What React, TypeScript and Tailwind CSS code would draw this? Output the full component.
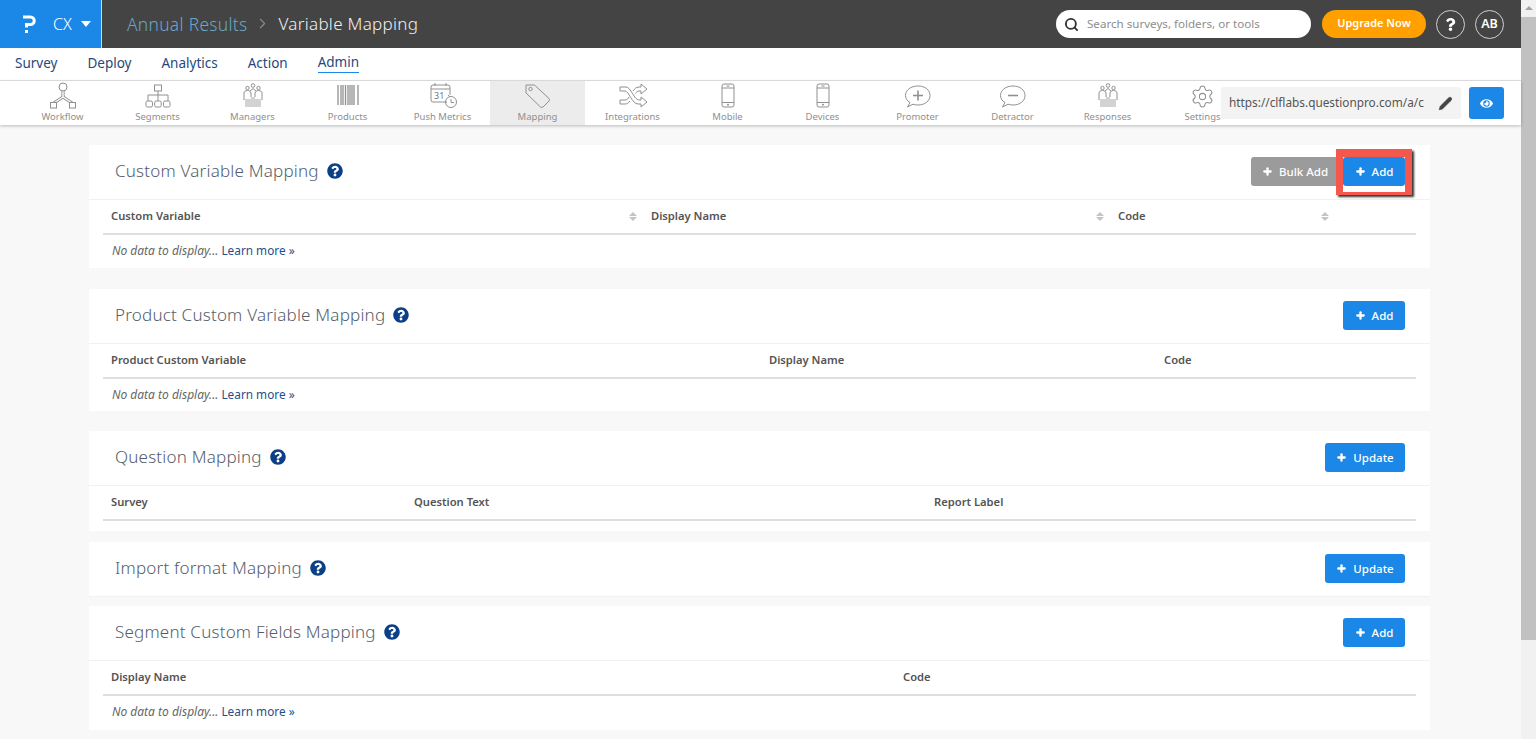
import { ChevronRight, Pencil, Plus, Search, Settings } from "lucide-react";
import { FaEye, FaQuestion, FaQuestionCircle } from "react-icons/fa";
import type { ReactNode } from "react";

const topNav = ["Survey", "Deploy", "Analytics", "Action", "Admin"];

function Svg({ children }: { children: ReactNode }) {
  return (
    <svg width="32" height="28" viewBox="0 0 32 28" fill="none" stroke="#909090" strokeWidth="1">
      {children}
    </svg>
  );
}

function People() {
  return (
    <Svg>
      <circle cx="16" cy="3.500" r="1.800" />
      <circle cx="10.500" cy="6" r="1.700" />
      <circle cx="21.500" cy="6" r="1.700" />
      <path d="M7 18v-7c0-1.500 1.500-2.500 3.500-2.500s3 1 3.500 2.500v4M18 15v-4c.5-1.500 1.500-2.500 3.500-2.500s3.500 1 3.500 2.500v7" />
      <path d="M13 9l3-2.500L19 9" />
      <path d="M9 17v8M11 17v8M13 17v8M15 15v10M17 15v10M19 17v8M21 17v8M23 17v8" strokeWidth=".8" />
    </Svg>
  );
}

function Phone() {
  return (
    <Svg>
      <rect x="10" y="2" width="12" height="23" rx="2" />
      <path d="M10 6h12M10 20.500h12M14.500 4h3" />
      <circle cx="16" cy="22.700" r=".6" fill="#909090" />
    </Svg>
  );
}

function Bubble({ plus }: { plus?: boolean }) {
  return (
    <Svg>
      <path d="M8 20.500c-3-1.700-4.500-4-4.500-7C3.500 8 9 4 16 4s12 4 12 9.500S23 23 16 23c-1.700 0-3.500-.2-5-.8L5.500 25z" />
      <path d="M11 13.500h10" strokeWidth="1.600" />
      {plus && <path d="M16 8.500v10" strokeWidth="1.600" />}
    </Svg>
  );
}

const tools: { label: string; icon: ReactNode; active?: boolean }[] = [
  {
    label: "Workflow",
    icon: (
      <Svg>
        <path d="M16 8v7L7 21M16 15l9 6" strokeWidth="3.200" />
        <path d="M16 8v7L7 21M16 15l9 6" strokeWidth="1.400" stroke="#ffffff" />
        <circle cx="16" cy="5" r="4" fill="#ffffff" />
        <rect x="3.500" y="20.500" width="6" height="5.500" fill="#ffffff" />
        <rect x="22.500" y="20.500" width="6" height="5.500" fill="#ffffff" />
      </Svg>
    ),
  },
  {
    label: "Segments",
    icon: (
      <Svg>
        <rect x="12.500" y="3" width="7" height="6" />
        <path d="M16 9v4M6 19v-6h20v6M16 13v6" />
        <rect x="4" y="19" width="6.500" height="6" rx="1.500" />
        <rect x="12.700" y="19" width="6.500" height="6" rx="1.500" />
        <rect x="21.500" y="19" width="6.500" height="6" rx="1.500" />
      </Svg>
    ),
  },
  { label: "Managers", icon: <People /> },
  {
    label: "Products",
    icon: (
      <Svg>
        <path d="M6 3v20M9 3v20M11 3v20M13.500 3v20M16 3v20M18 3v20M20 3v20M22 3v20M26 3v20" strokeWidth="1.300" />
      </Svg>
    ),
  },
  {
    label: "Push Metrics",
    icon: (
      <Svg>
        <path d="M20 20H6a2 2 0 0 1-2-2V5a2 2 0 0 1 2-2h15a2 2 0 0 1 2 2v8M4 7h19M8 1v3M19 1v3" />
        <text x="7" y="17" fontSize="9" fill="#777" stroke="none" fontFamily="'Noto Sans', sans-serif">
          31
        </text>
        <circle cx="24" cy="20" r="5.500" />
        <path d="M24 17v3.500h3M21 13l1.500 1.500" />
      </Svg>
    ),
  },
  {
    label: "Mapping",
    active: true,
    icon: (
      <Svg>
        <path
          d="M4 3h8.500L27 16.500a2 2 0 0 1 0 2.500l-6 6a2 2 0 0 1-2.500 0L4 11z"
          strokeLinejoin="round"
        />
        <circle cx="8.500" cy="7" r="1.700" />
      </Svg>
    ),
  },
  {
    label: "Integrations",
    icon: (
      <Svg>
        <path d="M3 5h6c5 0 8 13 13 13h2v-3l6 5-6 5v-3h-3C15 22 12 9 8 9H3zM3 22v-4h5c2 0 3-1 4-3M16 9c1.500-2 3-4 6-4h2V2l6 5-6 5V9h-2c-1.500 0-2.500 1-3.500 2.500M3 22h5c2 0 3.500-1 5-3" />
      </Svg>
    ),
  },
  { label: "Mobile", icon: <Phone /> },
  { label: "Devices", icon: <Phone /> },
  { label: "Promoter", icon: <Bubble plus /> },
  { label: "Detractor", icon: <Bubble /> },
  { label: "Responses", icon: <People /> },
  {
    label: "Settings",
    icon: (
      <div className="flex h-[28px] w-[32px] items-center justify-center">
        <Settings size={25} strokeWidth={1} className="text-[#909090]" />
      </div>
    ),
  },
];

function Btn({ label, width, gray }: { label: string; width: string; gray?: boolean }) {
  return (
    <button
      className={`flex h-[29px] items-center justify-center gap-[6px] rounded-[3px] text-[11.500px] font-medium text-white ${width} ${
        gray ? "bg-[#9b9b9b]" : "bg-[#1b87e6]"
      }`}
    >
      <Plus size={11} strokeWidth={5} />
      {label}
    </button>
  );
}

function Card({
  title,
  actions,
  columns,
  sorted,
  empty,
  className,
}: {
  title: string;
  actions: ReactNode;
  columns?: { label: string; width: string }[];
  sorted?: boolean;
  empty?: boolean;
  className: string;
}) {
  return (
    <section className={`bg-white ${className}`}>
      <div className="flex h-[55px] items-center justify-between border-b border-[#f1f1f1] pb-[1px] pl-[26px] pr-[25px]">
        <div className="flex items-center gap-[8px] pb-[2px]">
          <h2 className="text-[17px] font-light tracking-[0.2px] text-[#545e6b]">{title}</h2>
          <FaQuestionCircle size={16} className="text-[#0b3f87]" />
        </div>
        {actions}
      </div>
      {columns && (
        <div className="mx-[14px] flex h-[35px] items-center border-b-2 border-[#dedede] text-[11.200px] font-semibold text-[#545454]">
          {columns.map((c) => (
            <div key={c.label} className={`flex items-center justify-between pl-[8px] pr-[6px] ${c.width}`}>
              {c.label}
              {sorted && (
                <span className="flex flex-col gap-[1px]">
                  <span className="h-0 w-0 border-x-[4px] border-b-[4px] border-x-transparent border-b-[#c4c4c4]" />
                  <span className="h-0 w-0 border-x-[4px] border-t-[4px] border-x-transparent border-t-[#c4c4c4]" />
                </span>
              )}
            </div>
          ))}
        </div>
      )}
      {empty && (
        <p className="mx-[14px] pl-[9px] pt-[7px] text-[11.800px] text-[#666]">
          <em className="text-[12px]">No data to display...</em> <span className="text-[#1f4e8c]">Learn more »</span>
        </p>
      )}
    </section>
  );
}

export default function App() {
  return (
    <div className="flex h-[739px] w-full overflow-hidden bg-[#f8f8f8] font-['Noto_Sans',sans-serif]">
      <div className="flex min-w-0 flex-1 flex-col">
        <header className="flex h-12 shrink-0 items-center bg-[#444444]">
          <div className="flex h-full w-[102px] items-center border-r border-[#d8d8d8] bg-[#1b87e6] pl-[22px] text-white">
            <svg width="14" height="20" viewBox="0 0 14 20" fill="none" stroke="white" strokeWidth="3">
              <path d="M1 3h7.500a3.700 3.700 0 0 1 0 7.500H4.500v3" />
              <path d="M4.500 16v3" />
            </svg>
            <span className="ml-[17px] text-[16px] font-light">CX</span>
            <span className="ml-[9px] h-0 w-0 border-x-[5.500px] border-t-[6px] border-x-transparent border-t-white" />
          </div>
          <div className="ml-[25px] flex items-center">
            <span className="text-[17.400px] font-light tracking-[0.3px] text-[#6aa6c8]">Annual Results</span>
            <ChevronRight size={17} strokeWidth={1.500} className="mx-[7px] text-[#8b8b8b]" />
            <span className="text-[17px] font-light tracking-[0.3px] text-[#f1f1f1]">Variable Mapping</span>
          </div>
          <div className="ml-auto flex items-center">
            <div className="flex h-[28px] w-[255px] items-center gap-[8px] rounded-full bg-white pl-[8px] text-[11.600px] text-[#8d8d8d]">
              <Search size={15} strokeWidth={3} className="text-[#333]" />
              Search surveys, folders, or tools
            </div>
            <button className="ml-[11px] h-[28px] w-[104px] rounded-full bg-[#ff9f00] pb-[2px] text-[11px] font-semibold text-white">
              Upgrade Now
            </button>
            <span className="ml-[10px] flex h-[29px] w-[29px] items-center justify-center rounded-full border border-[#d0d0d0] text-white">
              <FaQuestion size={13} />
            </span>
            <span className="ml-[10px] mr-[17px] flex h-[29px] w-[29px] items-center justify-center rounded-full border border-[#d0d0d0] text-[12.500px] font-semibold text-white">
              AB
            </span>
          </div>
        </header>

        <nav className="flex h-[33px] shrink-0 items-center gap-[30px] border-b border-[#e3e3e3] bg-white pb-[2px] pl-[15px] text-[13.500px] text-[#24497c]">
          {topNav.map((item) => (
            <span key={item} className={item === "Admin" ? "border-b border-[#1b87e6] leading-[19px]" : "leading-[19px]"}>
              {item}
            </span>
          ))}
        </nav>

        <div className="relative flex h-[44px] shrink-0 bg-white pl-[15px] shadow-[0_1px_3px_rgba(0,0,0,0.25)]">
          {tools.map((t) => (
            <div
              key={t.label}
              className={`flex w-[95px] shrink-0 flex-col items-center pt-[1px] text-[9.500px] leading-[13px] text-[#8f8f8f] ${
                t.active ? "bg-[#ececec]" : ""
              }`}
            >
              {t.icon}
              <span>{t.label}</span>
            </div>
          ))}
          <div className="absolute left-[1221px] top-[6px] flex items-center">
            <div className="flex h-[32px] w-[240px] items-center justify-between rounded-[3px] bg-[#f3f3f3] pl-[8px] pr-[8px] text-[11.800px] text-[#555]">
              <span className="whitespace-nowrap">https://clflabs.questionpro.com/a/c</span>
              <Pencil size={15} fill="#444" strokeWidth={1} className="text-[#444]" />
            </div>
            <button className="ml-[8px] flex h-[32px] w-[35px] items-center justify-center rounded-[3px] bg-[#1b87e6] text-white">
              <FaEye size={13} />
            </button>
          </div>
        </div>

        <main className="ml-[89px] mt-[20px] flex w-[1341px] flex-col">
          <Card
            className="h-[123px]"
            title="Custom Variable Mapping"
            sorted
            empty
            columns={[
              { label: "Custom Variable", width: "w-[540px]" },
              { label: "Display Name", width: "w-[467px]" },
              { label: "Code", width: "w-[225px]" },
            ]}
            actions={
              <div className="flex items-center gap-[4px]">
                <Btn label="Bulk Add" width="w-[88px]" gray />
                <div className="relative">
                  <Btn label="Add" width="w-[62px]" />
                  <span className="absolute -bottom-[9px] -left-[7px] -right-[7px] -top-[8px] border-x-[7px] border-b-[3px] border-t-[8px] border-[#f4584c] shadow-[2px_2px_2px_rgba(0,0,0,0.8)]" />
                </div>
              </div>
            }
          />
          <Card
            className="mt-[21px] h-[122px]"
            title="Product Custom Variable Mapping"
            empty
            columns={[
              { label: "Product Custom Variable", width: "w-[658px]" },
              { label: "Display Name", width: "w-[395px]" },
              { label: "Code", width: "w-[200px]" },
            ]}
            actions={<Btn label="Add" width="w-[62px]" />}
          />
          <Card
            className="mt-[20px] h-[100px]"
            title="Question Mapping"
            columns={[
              { label: "Survey", width: "w-[303px]" },
              { label: "Question Text", width: "w-[520px]" },
              { label: "Report Label", width: "w-[300px]" },
            ]}
            actions={<Btn label="Update" width="w-[80px]" />}
          />
          <Card className="mt-[11px] h-[54px]" title="Import format Mapping" actions={<Btn label="Update" width="w-[80px]" />} />
          <Card
            className="mt-[10px] h-[124px]"
            title="Segment Custom Fields Mapping"
            empty
            columns={[
              { label: "Display Name", width: "w-[792px]" },
              { label: "Code", width: "w-[300px]" },
            ]}
            actions={<Btn label="Add" width="w-[62px]" />}
          />
        </main>
      </div>

      <div className="flex w-[15px] shrink-0 flex-col items-center bg-[#f1f1f1]">
        <span className="mt-[6px] h-0 w-0 border-x-[4px] border-b-[4px] border-x-transparent border-b-[#a3a3a3]" />
        <span className="mt-[7px] h-[623px] w-full bg-[#c1c1c1]" />
      </div>
    </div>
  );
}
